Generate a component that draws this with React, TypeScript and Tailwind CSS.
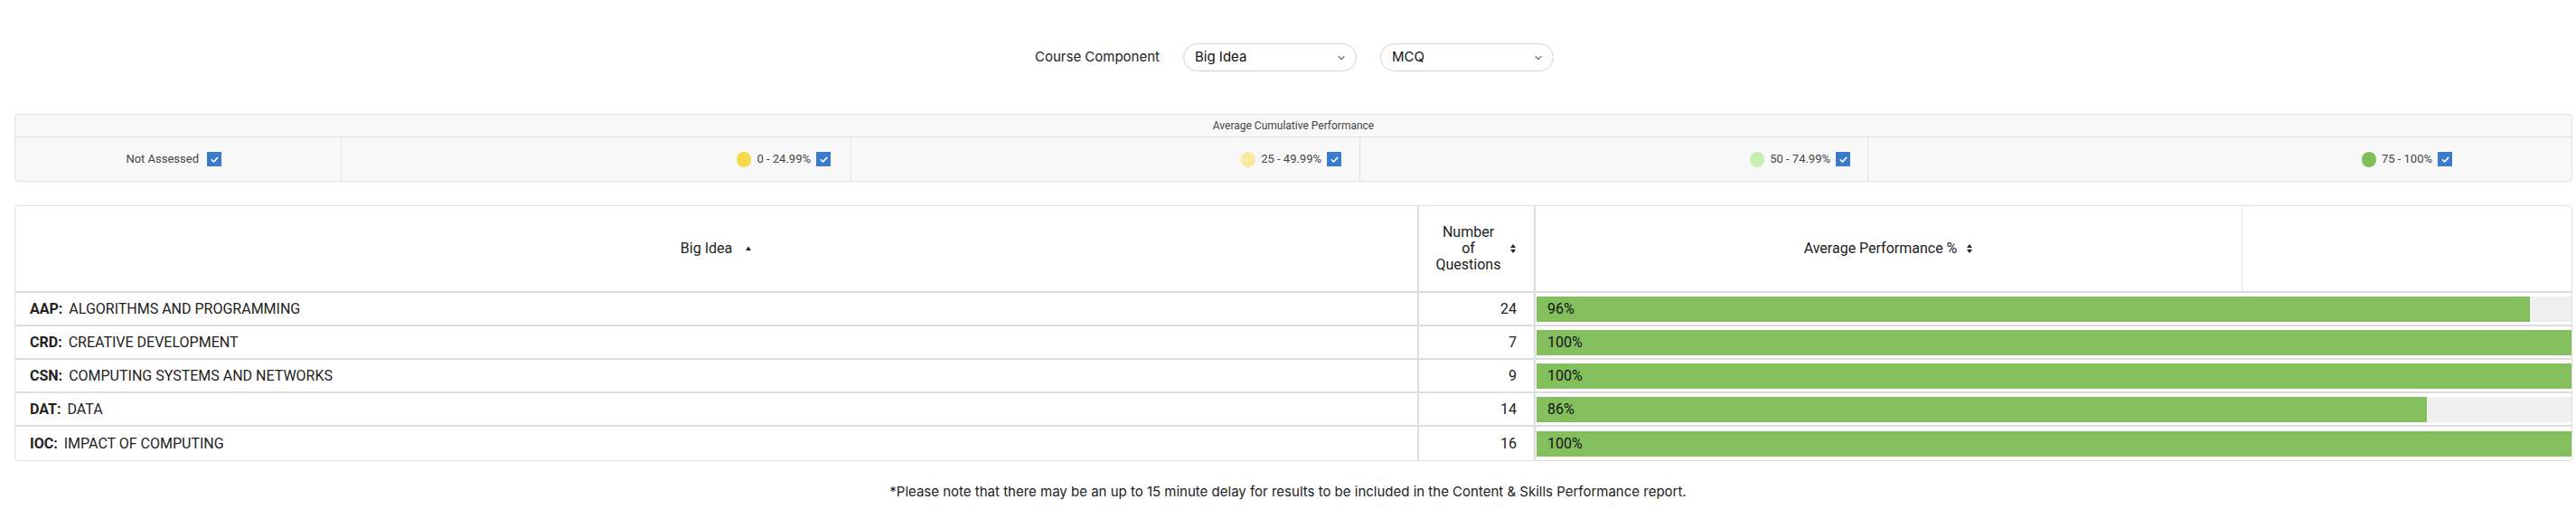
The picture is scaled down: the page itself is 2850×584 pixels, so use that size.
import { ChevronDown } from "lucide-react"

type Row = { code: string; name: string; count: number; pct: number }

const rows: Row[] = [
  { code: "AAP", name: "ALGORITHMS AND PROGRAMMING", count: 24, pct: 96 },
  { code: "CRD", name: "CREATIVE DEVELOPMENT", count: 7, pct: 100 },
  { code: "CSN", name: "COMPUTING SYSTEMS AND NETWORKS", count: 9, pct: 100 },
  { code: "DAT", name: "DATA", count: 14, pct: 86 },
  { code: "IOC", name: "IMPACT OF COMPUTING", count: 16, pct: 100 },
]

function Check() {
  return (
    <span className="inline-flex h-[16px] w-[16px] items-center justify-center bg-[#3a7bcc]">
      <svg width="11" height="11" viewBox="0 0 12 12" fill="none">
        <path d="M2.5 6.3l2.4 2.4 4.6-5" stroke="white" strokeWidth="1.8" strokeLinecap="round" strokeLinejoin="round" />
      </svg>
    </span>
  )
}

function Dot({ color }: { color: string }) {
  return <span className="inline-block h-[17px] w-[16px] rounded-full" style={{ backgroundColor: color }} />
}

function SortBoth() {
  return (
    <svg width="8" height="14" viewBox="0 0 8 14" className="ml-[10px]">
      <path d="M4 2L7 6H1z" fill="#222" />
      <path d="M4 12L7 8H1z" fill="#222" />
    </svg>
  )
}

function SortUp() {
  return (
    <svg width="8" height="8" viewBox="0 0 8 8" className="ml-[14px]">
      <path d="M4 1.5L7 6H1z" fill="#222" />
    </svg>
  )
}

function Select({ label }: { label: string }) {
  return (
    <div className="flex h-[31px] w-[192px] items-center justify-between rounded-full border border-[#d4d4d4] bg-white pl-[12px] pr-[10px] text-[15px] text-[#111]">
      <span>{label}</span>
      <ChevronDown size={12} strokeWidth={2.5} className="text-[#777]" />
    </div>
  )
}

export default function App() {
  return (
    <div className="min-h-[584px] w-full bg-white font-['Roboto',sans-serif] text-[#222]">
      <div className="flex items-center justify-center gap-[26px] pl-[14px] pt-[48px] font-['Inter',sans-serif]">
        <span className="text-[15px] text-[#222]">Course Component</span>
        <Select label="Big Idea" />
        <Select label="MCQ" />
      </div>

      {/* legend */}
      <div className="ml-[16px] mr-[4px] mt-[47px] overflow-hidden rounded-[4px] border border-[#e2e2e2] bg-[#f8f8f8] text-[#444]">
        <div className="flex h-[25px] items-center justify-center border-b border-[#e2e2e2] text-[12px]">
          Average Cumulative Performance
        </div>
        <div className="grid h-[48px] grid-cols-[360px_564px_563px_562px_1fr] text-[13px]">
          <div className="flex items-center justify-end gap-[9px] pr-[132px]">
            <span>Not Assessed</span>
            <Check />
          </div>
          <div className="flex items-center justify-end gap-[6px] border-l border-[#e2e2e2] pr-[22px]">
            <Dot color="#f6da4a" />
            <span>0 - 24.99%</span>
            <Check />
          </div>
          <div className="flex items-center justify-end gap-[6px] border-l border-[#e2e2e2] pr-[20px]">
            <Dot color="#faeaa0" />
            <span>25 - 49.99%</span>
            <Check />
          </div>
          <div className="flex items-center justify-end gap-[6px] border-l border-[#e2e2e2] pr-[19px]">
            <Dot color="#c8efb2" />
            <span>50 - 74.99%</span>
            <Check />
          </div>
          <div className="flex items-center justify-end gap-[6px] border-l border-[#e2e2e2] pr-[132px]">
            <Dot color="#84be5c" />
            <span>75 - 100%</span>
            <Check />
          </div>
        </div>
      </div>

      {/* table */}
      <div className="ml-[16px] mr-[4px] mt-[26px] overflow-hidden rounded-[4px] border border-[#dedede] text-[16px]">
        <div className="grid h-[96px] grid-cols-[1551px_129px_783px_1fr] border-b-2 border-[#dddddd]">
          <div className="flex items-center justify-center">
            <span>Big Idea</span>
            <SortUp />
          </div>
          <div className="flex items-center justify-center border-l-2 border-[#dddddd]">
            <span className="text-center leading-[18px]">
              Number
              <br />
              of
              <br />
              Questions
            </span>
            <SortBoth />
          </div>
          <div className="flex items-center justify-center border-l-2 border-[#dddddd]">
            <span>Average Performance %</span>
            <SortBoth />
          </div>
          <div className="border-l border-[#e4e4e4]" />
        </div>
        {rows.map((r, i) => (
          <div
            key={r.code}
            className={`grid h-[37px] grid-cols-[1551px_129px_1fr] ${i < rows.length - 1 ? "border-b-2 border-[#dddddd]" : ""}`}
          >
            <div className="flex items-center pl-[16px]">
              <span className="font-bold">{r.code}:</span>
              <span className="ml-[7px]">{r.name}</span>
            </div>
            <div className="flex items-center justify-end border-l-2 border-[#dddddd] pr-[19px]">{r.count}</div>
            <div className="flex items-center border-l-2 border-[#dddddd] pl-[1px]">
              <div className="h-[28px] w-full bg-[#efefef]">
                <div className="flex h-full items-center bg-[#84bf5d] pl-[12px] text-[#111]" style={{ width: `${r.pct}%` }}>
                  {r.pct}%
                </div>
              </div>
            </div>
          </div>
        ))}
      </div>

      <p className="mt-[23px] text-center font-['Inter',sans-serif] text-[15px] text-[#222]">
        *Please note that there may be an up to 15 minute delay for results to be included in the Content &amp; Skills Performance report.
      </p>
    </div>
  )
}
